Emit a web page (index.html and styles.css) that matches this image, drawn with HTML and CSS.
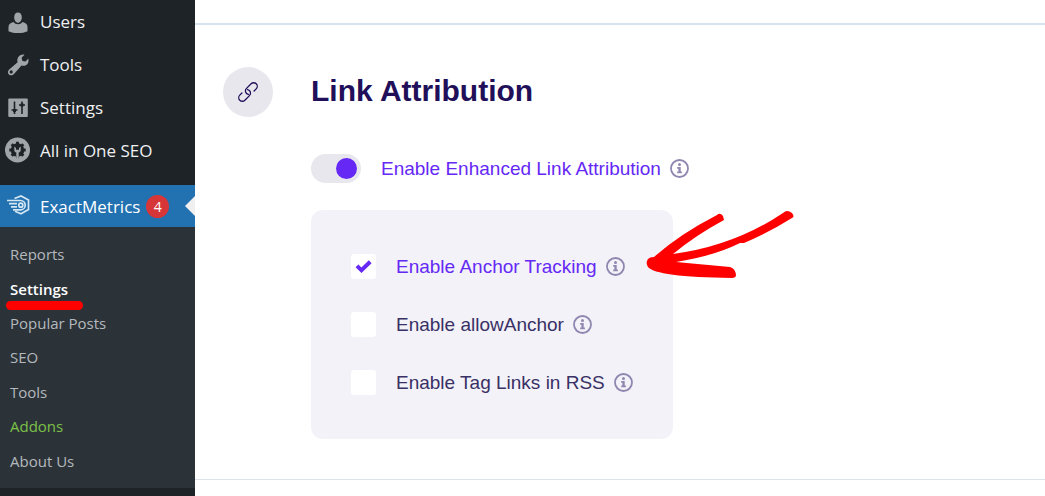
FILE: index.html
```html
<!DOCTYPE html>
<html lang="en">
<head>
    <meta charset="UTF-8">
    <meta name="viewport" content="width=device-width, initial-scale=1.0">
    <title>ExactMetrics Settings</title>
    <link rel="stylesheet" href="styles.css">
</head>
<body>
    <!-- shared info icon -->
    <svg class="sprite" aria-hidden="true">
        <symbol id="info" viewBox="0 0 19 19">
            <circle cx="9.5" cy="9.5" r="8.5" fill="none" stroke="currentColor" stroke-width="1.8"/>
            <circle cx="9.5" cy="5.6" r="1.5" fill="currentColor"/>
            <path d="M7.2 8h3.500v4.500h1.200v1.800H7.200v-1.800h1.200V9.700H7.200z" fill="currentColor"/>
        </symbol>
    </svg>

    <div class="page">
        <nav class="sidebar">
            <ul class="menu">
                <li><a href="#">
                    <svg class="menu-icon" viewBox="0 0 26 26"><path d="M13 3.500c2.400 0 3.800 2 3.800 4.700 0 3-1.700 5.500-3.800 5.500s-3.800-2.500-3.800-5.500c0-2.700 1.400-4.700 3.800-4.700zM8.500 13c1.300 1.300 2.500 2.300 4.500 2.300s3.200-1 4.500-2.300c3 .6 5 2.200 5 5v4.200c-2.500 1.300-6 1.900-9.500 1.900s-7-.6-9.500-1.900V18c0-2.800 2-4.400 5-5z"/></svg>
                    Users
                </a></li>
                <li><a href="#">
                    <svg class="menu-icon" viewBox="0 0 26 26"><path d="M19.500 2.700 16.600 5.800l.8 3.200 3.200.6 2.700-3.100c.8 2.900-.2 5.400-2 6.500-1.600 1-3.300 1-4.800.6l-7.500 8.400c-1.500 1.700-3.700 1.700-5.100.4-1.400-1.400-1.300-3.500.3-4.900l8.400-7.300c-.6-1.700-.3-3.900.9-5.400 1.500-1.800 3.900-2.600 6-2.100zM6.200 18.300a1.600 1.600 0 1 0 0 3.200 1.600 1.600 0 0 0 0-3.200z" fill-rule="evenodd"/></svg>
                    Tools
                </a></li>
                <li><a href="#">
                    <svg class="menu-icon" viewBox="0 0 26 26"><rect x="3.300" y="3.500" width="19.500" height="18.500" rx="1"/><path d="M9.500 6.500v12.500M17 6.500v12.500M6.500 15h6M14 10h6" fill="none" stroke="#1d2327" stroke-width="1.600"/><path d="M8 14h3v3H8zM15.500 8.500h3v3h-3z" fill="#1d2327"/></svg>
                    Settings
                </a></li>
                <li><a href="#">
                    <svg class="menu-icon" viewBox="0 0 26 26"><circle cx="12.500" cy="12" r="12.500"/><g transform="translate(-.5 0)"><g fill="#1d2327"><circle cx="13" cy="12" r="6.800"/><path id="teeth" d="M11.500 3.800h3v3h-3zM11.500 17.200h3v3h-3zM4.800 10.500h3v3h-3zM18.200 10.500h3v3h-3z"/><use href="#teeth" transform="rotate(45 13 12)"/></g><path d="M9.800 8.500v3.500c0 1.300.8 2.200 2 2.600V21h2.400v-6.400c1.200-.4 2-1.300 2-2.600V8.500L14.500 10v1.800h-3V10z"/></g></svg>
                    All in One SEO
                </a></li>
                <li class="current"><a href="#">
                    <svg class="menu-icon" viewBox="0 0 26 26" fill="none" stroke="#d5e6f3" stroke-width="1.700"><path d="M9.500 5.500 16 3l7.500 4v9.500L16 20.800l-6-2.600"/><path d="M2 7.500h13.500a4.700 4.700 0 0 1 0 9.400H8M4 10.600h8M6 13.800h6"/><circle cx="15.800" cy="12.200" r="2"/></svg>
                    ExactMetrics
                    <span class="count">4</span>
                </a></li>
            </ul>
            <ul class="submenu">
                <li><a href="#">Reports</a></li>
                <li class="active"><a href="#">Settings</a></li>
                <li><a href="#">Popular Posts</a></li>
                <li><a href="#">SEO</a></li>
                <li><a href="#">Tools</a></li>
                <li class="addons"><a href="#">Addons</a></li>
                <li><a href="#">About Us</a></li>
            </ul>
        </nav>

        <main class="content">
            <section class="block">
                <div class="block-icon">
                    <svg width="22" height="22" viewBox="-11 -11 22 22" fill="none" stroke="#210f59" stroke-width="1.300" stroke-linecap="round">
                        <g transform="rotate(-45)">
                            <path id="chain" d="M5 3.600H8a3.600 3.600 0 0 0 0-7.200H1.500a3.600 3.600 0 0 0-3 5.600"/>
                            <use href="#chain" transform="rotate(180)"/>
                        </g>
                    </svg>
                </div>
                <div class="block-body">
                    <h2>Link Attribution</h2>
                    <div class="field on">
                        <input type="checkbox" role="switch" class="toggle" id="enhanced" checked>
                        <label for="enhanced">Enable Enhanced Link Attribution</label>
                        <svg class="info"><use href="#info"/></svg>
                    </div>
                    <div class="options">
                        <div class="field on">
                            <span class="check">
                                <input type="checkbox" id="anchor" checked>
                                <svg class="tick" width="17" height="14" viewBox="0 0 17 14"><path d="M2 5.800 6.500 10.300 15.200 1.800" fill="none" stroke="#6528f5" stroke-width="4"/></svg>
                            </span>
                            <label for="anchor">Enable Anchor Tracking</label>
                            <svg class="info"><use href="#info"/></svg>
                        </div>
                        <div class="field">
                            <span class="check"><input type="checkbox" id="allow"></span>
                            <label for="allow">Enable allowAnchor</label>
                            <svg class="info"><use href="#info"/></svg>
                        </div>
                        <div class="field">
                            <span class="check"><input type="checkbox" id="rss"></span>
                            <label for="rss">Enable Tag Links in RSS</label>
                            <svg class="info"><use href="#info"/></svg>
                        </div>
                        <svg class="arrow" width="150" height="72" viewBox="0 0 150 72" fill="#f00"><path d="M1 51Q2 47 8 47Q34 24 71 5Q74 2 77 6L78 10Q50 25 27 44Q88 36 137 3Q141-1 146 3Q149 7 146 8Q122 23 98 33L94 33Q68 46 30 52L84 57Q90 59 90 66Q89 68 86 68Q10 67 2 57Q0 54 1 51Z"/></svg>
                    </div>
                </div>
            </section>
        </main>
    </div>
</body>
</html>
```
FILE: styles.css
```css
* {
    box-sizing: border-box;
}
body {
    margin: 0;
    font-family: "Liberation Sans", Arial, sans-serif;
    background-color: #fff;
}
a {
    color: inherit;
    text-decoration: none;
}
ul {
    list-style: none;
    margin: 0;
    padding: 0;
}
.sprite {
    display: none;
}
.page {
    display: flex;
    min-height: 100vh;
}

/* sidebar */
.sidebar {
    width: 195px;
    flex-shrink: 0;
    background-color: #1d2327;
    color: #f0f0f1;
    font-family: "Open Sans", "Noto Sans", sans-serif;
}
.menu a {
    display: flex;
    align-items: center;
    height: 43px;
    padding-left: 5px;
    font-size: 17px;
    white-space: nowrap;
}
.menu-icon {
    width: 26px;
    height: 26px;
    margin-right: 9px;
    fill: #a0a5aa;
    overflow: visible;
}
.menu .current {
    position: relative;
    margin-top: 13px;
    background-color: #2271b1;
    color: #fff;
}
.menu .current a {
    height: 42px;
}
.current .menu-icon {
    fill: none;
}
.current::after {
    content: "";
    position: absolute;
    right: 0;
    top: 11px;
    border: 10px solid transparent;
    border-left: 0;
    border-right-color: #f0f0f1;
}
.count {
    width: 23px;
    height: 23px;
    margin-left: 6px;
    border-radius: 50%;
    background-color: #d63638;
    font-size: 14px;
    line-height: 23px;
    text-align: center;
}
.submenu {
    display: grid;
    grid-auto-rows: 1fr;
    height: 261px;
    padding: 10px;
    background-color: #2c3338;
    color: #b4b9be;
    font-size: 15px;
}
.submenu li {
    display: flex;
    align-items: center;
}
.submenu .active {
    position: relative;
    color: #fff;
    font-weight: 600;
}
.submenu .active::after {
    content: "";
    position: absolute;
    left: -4px;
    bottom: -4px;
    width: 77px;
    height: 9px;
    border-radius: 5px;
    background-color: #f00;
}
.submenu .addons {
    color: #7cc048;
}

/* settings */
.content {
    flex: 1;
    padding-top: 23px;
}
.block {
    display: flex;
    gap: 38px;
    padding: 42px 28px 40px;
    border-top: 2px solid #d6e2ed;
    border-bottom: 1px solid #dce3eb;
}
.block-icon {
    display: flex;
    align-items: center;
    justify-content: center;
    width: 50px;
    height: 50px;
    border-radius: 50%;
    background-color: #e8e7ee;
}
h2 {
    margin: 0 0 39px;
    color: #210f59;
    font-size: 30px;
    line-height: 48px;
}
.field {
    display: flex;
    align-items: center;
    color: #393065;
    font-size: 19px;
}
.field.on {
    color: #6528f5;
}
.field label {
    margin: 0 9px 0 20px;
}
.info {
    width: 19px;
    height: 19px;
    color: #9087b0;
}
.toggle {
    appearance: none;
    width: 50px;
    height: 29px;
    margin: 0;
    padding: 4px;
    border-radius: 15px;
    background-color: #e8e7ee;
}
.toggle::before {
    content: "";
    display: block;
    width: 21px;
    height: 21px;
    border-radius: 50%;
    background-color: #6528f5;
}
.toggle:checked::before {
    margin-left: auto;
}
.options {
    position: relative;
    display: grid;
    gap: 33px;
    width: fit-content;
    margin-top: 27px;
    padding: 44px 40px;
    border-radius: 12px;
    background-color: #f3f2f8;
}
.check {
    display: grid;
    place-items: center;
}
.check > * {
    grid-area: 1 / 1;
}
.check input {
    appearance: none;
    width: 25px;
    height: 25px;
    margin: 0;
    border-radius: 3px;
    background-color: #fff;
}
.tick {
    pointer-events: none;
}
.arrow {
    position: absolute;
    left: 335px;
    top: 0;
}
```
